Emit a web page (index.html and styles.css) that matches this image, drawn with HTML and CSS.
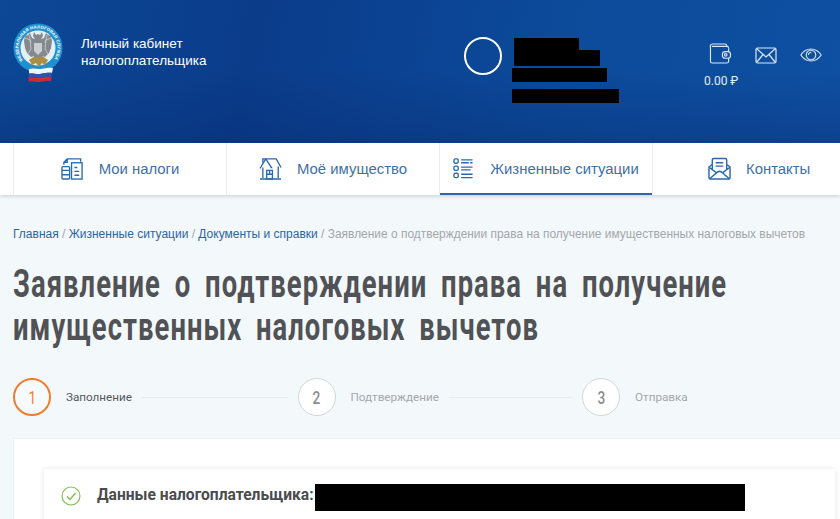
FILE: index.html
```html
<!DOCTYPE html>
<html lang="ru">
<head>
<meta charset="utf-8">
<title>Личный кабинет</title>
<link rel="stylesheet" href="styles.css">
</head>
<body>
<header class="top">
  <div class="brand">
    <svg class="emblem" viewBox="0 0 50 60" width="50" height="60">
      <defs><path id="arc" d="M10.100 37.500 A19.500 19.500 0 1 1 39.900 37.500"/></defs>
      <circle cx="25" cy="25" r="24.500" fill="#1f8fd0"/>
      <circle cx="25" cy="25" r="17.500" fill="#e6eff3"/>
      <text class="emblem-text"><textPath href="#arc" textLength="86">ФЕДЕРАЛЬНАЯ НАЛОГОВАЯ СЛУЖБА</textPath></text>
      <path d="M21 9l2 3 2-1 2 1 2-3 1 4-2 3 3-1 2-5 2 2 3 1 1 5-1 7-2 5-4 4-3-1 1 5-5 3-5-3 1-5-3 1-4-4-2-5-1-7 1-5 3-1 2-2 2 5 3 1-2-3z" fill="#83898e"/>
      <path d="M12 15l5 2 1 9-3 5M38 15l-5 2-1 9 3 5M16 12l2 8M34 12l-2 8" fill="none" stroke="#c3c9cc" stroke-width=".9"/>
      <path d="M21 20h8v8l-4 4-4-4z" fill="#c9ced0"/>
      <path d="M16 37l6-4 3 2 4-2 6 4-3 5-3-2-3 4-3-4-4 2z" fill="#a98f45"/>
      <path d="M16 46c4-1.500 8 .5 12 0s8-1.500 12-1l-1 5c-4-.5-8 .5-12 1s-7-1-11-.5z" fill="#f4f6f8"/>
      <path d="M16 50.500c4-.5 7 1 11 .5s8-1.500 12-1l-.5 4c-4-.5-7 .5-11 1s-7-1-11.500-.5z" fill="#2b55b0"/>
      <path d="M15.500 54.500c4.500-.5 7.500 1 11.500.5s7-1.500 11.500-1l-.5 4c-4-.5-7 .5-11 1s-7.500-1-11.500-.5z" fill="#d62c33"/>
    </svg>
    <div class="brand-name">Личный кабинет<br>налогоплательщика</div>
  </div>
  <div class="user">
    <div class="avatar"></div>
    <div class="redacted">
      <span class="r r1"></span>
      <span class="r r2"></span>
      <span class="r r3"></span>
      <span class="r r4"></span>
    </div>
  </div>
  <div class="tools">
    <div class="wallet">
      <svg viewBox="0 0 24 22" width="23" height="21" fill="none" stroke="#dbe7f5" stroke-width="1.200">
        <path d="M3 3.500h15.500a2 2 0 0 1 2 2"/><path d="M1.500 4.500a2.500 2.500 0 0 1 2-3.500h13a2 2 0 0 1 2 2.500"/>
        <path d="M1.500 4v15a2 2 0 0 0 2 2h15a2 2 0 0 0 2-2v-3M20.500 9V5.500"/>
        <rect x="14" y="9" width="8.500" height="7" rx="3"/><circle cx="17.500" cy="12.500" r="1.300"/>
      </svg>
      <span class="balance">0.00 ₽</span>
    </div>
    <svg class="mail" viewBox="0 0 22 17" width="22" height="17" fill="none" stroke="#dbe7f5" stroke-width="1.200">
      <rect x="1" y="1" width="20" height="15" rx="1.500"/><path d="M1.500 1.500L11 10l9.500-8.500M1.500 15.500L8 7.500M20.500 15.500L14 7.500"/>
    </svg>
    <svg class="eye" viewBox="0 0 22 14" width="22" height="14" fill="none" stroke="#dbe7f5" stroke-width="1.100">
      <path d="M.8 7C3.500 3 7 1 11 1s7.500 2 10.200 6C18.500 11 15 13 11 13S3.500 11 .8 7z"/><circle cx="11" cy="7" r="4.800"/><path d="M8.500 7A2.800 2.800 0 0 1 11.500 4.200"/>
    </svg>
  </div>
</header>

<nav class="menu">
  <a class="item">
    <svg viewBox="0 0 24 24" width="23" height="23" fill="none" stroke="#2b68ad" stroke-width="1.400">
      <path d="M3 8V5.500L6.500 2H20.500V5M6.500 2V5.500H3"/><rect x="1" y="10" width="8" height="13" rx="1"/><path d="M1 14h8M1 18.500h8"/><rect x="11" y="6" width="11" height="17"/><path d="M14 11h3M14 15h5M14 19h5"/>
    </svg>
    <span>Мои налоги</span>
  </a>
  <a class="item">
    <svg viewBox="0 0 24 24" width="23" height="23" fill="none" stroke="#2b68ad" stroke-width="1.400">
      <path d="M1 12L7 2h11l5 9M7 2l6 9-1 0M4 11v11M20 10v12M1 23h22"/><rect x="8" y="14" width="6" height="9"/><path d="M8 18h6M11 14v4M4 6V2h3"/>
    </svg>
    <span>Моё имущество</span>
  </a>
  <a class="item active">
    <svg viewBox="0 0 22 22" width="21" height="21" fill="none" stroke="#2b68ad" stroke-width="1.400">
      <rect x="1" y="1" width="4.500" height="4.500" rx="1.500"/><rect x="1" y="8.500" width="4.500" height="4.500" rx="1.500"/><rect x="1" y="16" width="4.500" height="4.500" rx="1.500"/>
      <path d="M8.500 2h12M8.500 5h8M18 5h2.500M8.500 9.500h12M8.500 12.500h10M8.500 17h12M8.500 20.500h12"/>
    </svg>
    <span>Жизненные ситуации</span>
  </a>
  <a class="item">
    <svg viewBox="0 0 24 24" width="23" height="23" fill="none" stroke="#2b68ad" stroke-width="1.500">
      <path d="M1 10.500V21a2 2 0 0 0 2 2h18a2 2 0 0 0 2-2V10.500L19.500 7.500V3a1.500 1.500 0 0 0-1.500-1.500H6A1.500 1.500 0 0 0 4.500 3v4.500z"/>
      <path d="M1.500 11l7.500 5.500-7 6M22.500 11L15 16.500l7 6M9 16.500c2-2 4-2 6 0M4.500 8v5M19.500 8v5M8 6h8M8 9.500h8"/>
    </svg>
    <span>Контакты</span>
  </a>
</nav>

<main class="page">
  <p class="crumbs">
    <a>Главная</a> / <a>Жизненные ситуации</a> / <a>Документы и справки</a> / <span class="cur">Заявление о подтверждении права на получение имущественных налоговых вычетов</span>
  </p>
  <h1 class="title">Заявление о подтверждении права на получение<br>имущественных налоговых вычетов</h1>
  <ol class="steps">
    <li class="step now"><span class="num"><span class="digit">1</span></span><span class="lbl">Заполнение</span><span class="line"></span></li>
    <li class="step"><span class="num"><span class="digit">2</span></span><span class="lbl">Подтверждение</span><span class="line"></span></li>
    <li class="step last"><span class="num"><span class="digit">3</span></span><span class="lbl">Отправка</span></li>
  </ol>
  <section class="panel">
    <div class="row">
      <svg viewBox="0 0 20 20" width="20" height="20" fill="none" stroke="#7cbf4e" stroke-width="1.100">
        <circle cx="10" cy="10" r="9"/><path d="M6 10.500l3 3 5.500-6.500" stroke-width="1.400"/>
      </svg>
      <strong class="row-title">Данные налогоплательщика:</strong>
      <span class="row-redact"></span>
    </div>
  </section>
</main>
</body>
</html>
```
FILE: styles.css
```css
* { box-sizing: border-box; }
html, body { margin: 0; height: 100%; }
body {
  width: 840px;
  height: 519px;
  overflow: hidden;
  background: #f3f8fb;
  font-family: Roboto, "Liberation Sans", sans-serif;
}
.top {
  height: 143px;
  display: flex;
  align-items: flex-start;
  color: #fff;
  background: linear-gradient(100deg, #0c4896 0%, #0a3c8a 30%, #0c4a9a 65%, #0f50a2 100%);
  position: relative;
}
.top::after {
  content: "";
  position: absolute;
  inset: 70px 0 0 0;
  background: linear-gradient(180deg, rgba(8, 40, 110, 0) 0%, rgba(8, 40, 110, .35) 100%);
  pointer-events: none;
}
.brand {
  width: 464px;
  flex: none;
  display: flex;
  padding: 23px 0 0 13px;
  gap: 18px;
}
.emblem { display: block; flex: none; }
.emblem-text {
  font: 700 4.300px "Liberation Sans", sans-serif;
  fill: #fff;
}
.brand-name {
  padding-top: 12px;
  font: 13.500px/17px "Liberation Sans", sans-serif;
}
.user { width: 239px; flex: none; display: flex; padding-top: 37px; gap: 10px; }
.avatar { width: 38px; height: 38px; border: 2px solid #fff; border-radius: 50%; flex: none; }
.redacted { position: relative; z-index: 1; display: flex; flex-direction: column; padding-top: 1px; }
.r { display: block; background: #000; }
.r1 { width: 65px; height: 12px; margin-left: 2px; }
.r2 { width: 86px; height: 16px; margin-left: 2px; }
.r3 { width: 95px; height: 14px; margin-top: 2px; }
.r4 { width: 107px; height: 14px; margin-top: 7px; }
.tools { display: flex; align-items: flex-start; padding-top: 43px; position: relative; z-index: 1; }
.wallet { width: 46px; display: flex; flex-direction: column; margin-left: 6px; }
.wallet svg { display: block; }
.balance { font-size: 12px; line-height: 14px; margin: 10px 0 0 -5px; white-space: nowrap; color: #e6eef8; }
.mail { margin: 4px 0 0 0; }
.eye { margin: 5px 0 0 23px; }
.menu {
  height: 52px;
  padding-left: 13px;
  background: #fff;
  display: grid;
  grid-template-columns: 213px 213px 214px 187px;
  box-shadow: 0 1px 4px rgba(60, 80, 100, .25);
  position: relative;
}
.item {
  display: flex;
  align-items: center;
  justify-content: center;
  gap: 15px;
  padding-bottom: 1px;
  border-left: 1px solid #e9edf0;
  color: #3f70a8;
  font: 14.900px "Liberation Sans", sans-serif;
  white-space: nowrap;
}
.item.active { box-shadow: inset 0 -2px 0 #2b68ad; border-right: 1px solid #e9edf0; gap: 16px; }
.item:last-child { border-left: 0; justify-content: flex-start; padding-left: 55px; }
.page { padding: 0 0 0 13px; }
.crumbs {
  margin: 0;
  padding-top: 32px;
  font: 12px/14px "Liberation Sans", sans-serif;
  color: #a0a6aa;
  white-space: nowrap;
}
.crumbs a { color: #2f659f; }
.cur { color: #a3a7aa; font-size: 11.950px; }
.title {
  margin: 22px 0 0;
  font: 700 39px/43px Roboto, sans-serif;
  letter-spacing: 1.500px;
  word-spacing: 8.500px;
  color: #505255;
  white-space: nowrap;
  transform: scaleX(.702);
  transform-origin: left center;
}
.steps {
  list-style: none;
  margin: 29px 0 0;
  padding: 0;
  display: flex;
  height: 38px;
}
.step { display: flex; flex: none; align-items: center; width: 284.500px; color: #a4a8ac; font-size: 11.700px; }
.last { width: 240px; }
.num {
  width: 38px;
  height: 38px;
  flex: none;
  border-radius: 50%;
  border: 1px solid #d4d6d8;
  background: #fff;
  display: flex;
  align-items: center;
  justify-content: center;
  font: 500 19px Roboto, sans-serif;
  color: #8b8e91;
}
.digit { display: inline-block; transform: scaleX(.72); }
.now .num { border: 2px solid #ee7d2d; color: #ee7d2d; font-weight: 400; background: #f7fafc; }
.now { color: #55585b; }
.lbl { margin-left: 15px; }
.line { flex: 1; height: 1px; background: #e6ecef; margin: 0 10px 0 10px; }
.panel {
  margin-top: 22px;
  height: 120px;
  padding: 30px 5px 0 30px;
  background: #fff;
  border: 1px solid #edf1f4;
  border-right: 0;
}
.row {
  height: 80px;
  display: flex;
  align-items: flex-start;
  padding: 15px 0 0 17px;
  background: #fff;
  box-shadow: 0 0 5px rgba(60, 80, 100, .14);
}
.row svg { flex: none; margin-top: 2px; }
.row-title { margin-left: 16px; font: 700 15.600px/22px Roboto, "Liberation Sans", sans-serif; color: #4a4c4f; white-space: nowrap; }
.row-redact { width: 430px; height: 27px; margin-left: 1px; background: #000; flex: none; }
```
